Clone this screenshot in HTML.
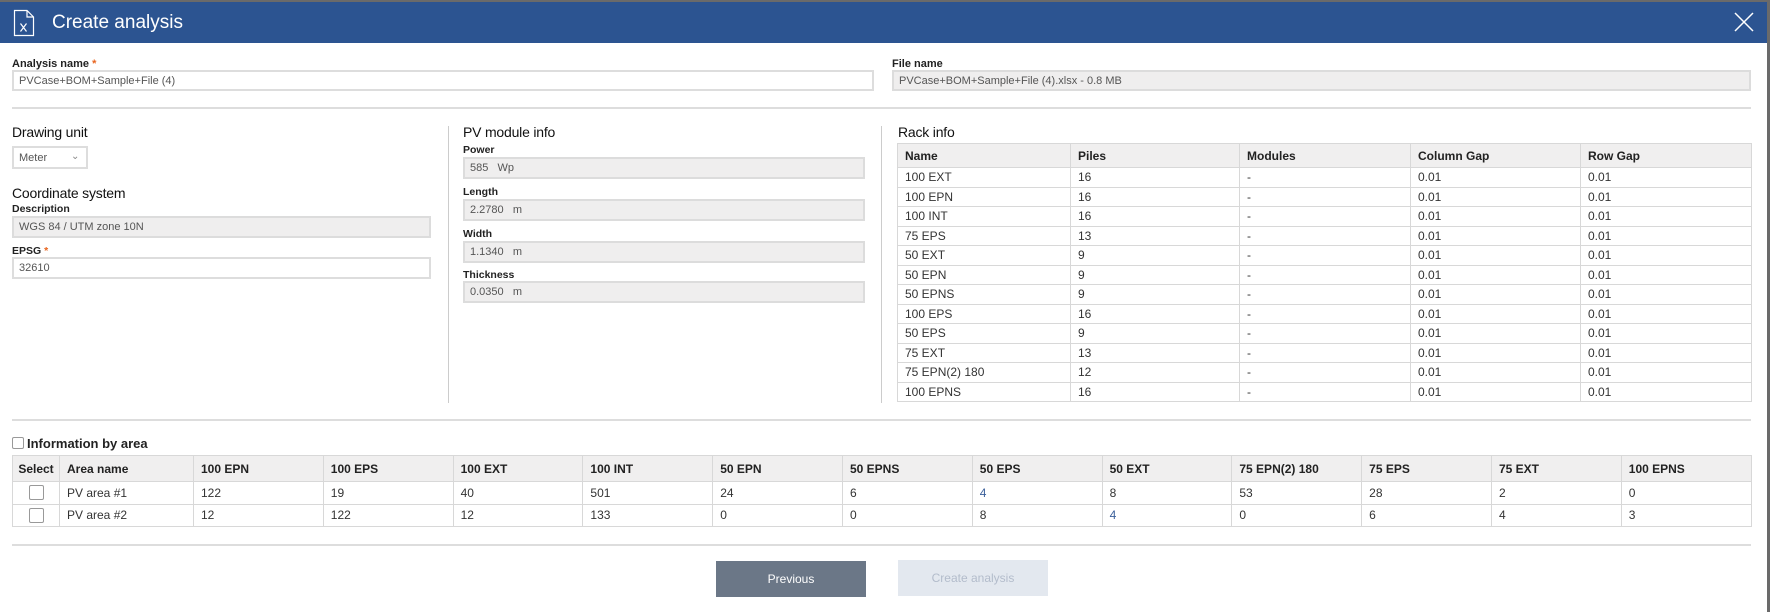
<!DOCTYPE html>
<html><head><meta charset="utf-8"><style>
*{box-sizing:border-box;margin:0;padding:0}
body{width:1770px;height:612px;background:#6a6a6a;font-family:"Liberation Sans",sans-serif;color:#222;position:relative;overflow:hidden}
.modal{position:absolute;left:0;top:2px;width:1767px;height:610px;background:#fff}
.hdr{position:absolute;left:0;top:0;width:1767px;height:41px;background:#2c5491;color:#fff}
.hdr .t{position:absolute;left:52px;top:10px;font-size:19px}
.a{position:absolute}
.lbl{position:absolute;font-size:11px;font-weight:bold;color:#222}
.star{color:#e8641e}
.inp{position:absolute;border:2px solid #ddd;background:#fff;font-size:11px;color:#555;padding-left:5px;display:flex;align-items:center}
.ro{background:#efeeee;border-color:#dcdcdc}
.h2{position:absolute;font-size:14px;color:#111;letter-spacing:-0.2px}
.hr{position:absolute;left:12px;width:1739px;height:2px;background:#ddd}
.vr{position:absolute;width:1px;background:#ccc}
table{position:absolute;border-collapse:collapse;font-size:12px;table-layout:fixed}
td,th{border:1.5px solid #d8d8d8;text-align:left;padding:0 0 0 7px;font-weight:normal;white-space:nowrap}
th{background:#f0efef;font-weight:bold;color:#222}
.rack td{height:19.5px;color:#333}
.rack th{height:24px}
.area th{height:26px}
.area td{height:22.5px;color:#333}
.cb{display:inline-block;width:15px;height:15px;border:1.5px solid #999;border-radius:2px;background:#fff;vertical-align:middle}
.btn{position:absolute;font-size:12px;display:flex;align-items:center;justify-content:center}
</style></head><body>
<div class="modal">
<div class="hdr">
<svg class="a" style="left:13px;top:7px" width="22" height="28" viewBox="0 0 22 28" fill="none" stroke="#fff" stroke-width="1.2"><path d="M1.5 1.5H14L20.5 8V26.5H1.5Z"/><path d="M14 1.5V8H20.5"/><path d="M7.5 14.5L13.5 22.5M13.5 14.5L7.5 22.5"/></svg>
<div class="t">Create analysis</div>
<svg class="a" style="left:1733px;top:9px" width="22" height="22" viewBox="0 0 22 22" stroke="#fff" stroke-width="1.5"><path d="M2 2L20 20M20 2L2 20"/></svg>
</div>

<div class="lbl" style="left:12px;top:56px">Analysis name <span class="star">*</span></div>
<div class="inp" style="left:12px;top:68px;width:862px;height:21px">PVCase+BOM+Sample+File (4)</div>
<div class="lbl" style="left:892px;top:56px">File name</div>
<div class="inp ro" style="left:892px;top:68px;width:859px;height:21px">PVCase+BOM+Sample+File (4).xlsx - 0.8 MB</div>
<div class="hr" style="top:105px"></div>

<div class="h2" style="left:12px;top:122px">Drawing unit</div>
<div class="inp" style="left:12px;top:144px;width:76px;height:23px">Meter<span style="position:absolute;left:57px;top:3px;color:#888;font-size:10px">&#8964;</span></div>
<div class="h2" style="left:12px;top:183px">Coordinate system</div>
<div class="lbl" style="left:12px;top:201px;font-size:10.5px">Description</div>
<div class="inp ro" style="left:12px;top:214px;width:419px;height:22px">WGS 84 / UTM zone 10N</div>
<div class="lbl" style="left:12px;top:243px;font-size:10.5px">EPSG <span class="star">*</span></div>
<div class="inp" style="left:12px;top:255px;width:419px;height:22px">32610</div>

<div class="vr" style="left:448px;top:124px;height:277px"></div>
<div class="h2" style="left:463px;top:122px">PV module info</div>
<div class="lbl" style="left:463px;top:142px;font-size:10.5px">Power</div>
<div class="inp ro" style="left:463px;top:155px;width:402px;height:22px">585&nbsp;&nbsp; Wp</div>
<div class="lbl" style="left:463px;top:184px;font-size:10.5px">Length</div>
<div class="inp ro" style="left:463px;top:197px;width:402px;height:22px">2.2780&nbsp;&nbsp; m</div>
<div class="lbl" style="left:463px;top:226px;font-size:10.5px">Width</div>
<div class="inp ro" style="left:463px;top:239px;width:402px;height:22px">1.1340&nbsp;&nbsp; m</div>
<div class="lbl" style="left:463px;top:267px;font-size:10.5px">Thickness</div>
<div class="inp ro" style="left:463px;top:279px;width:402px;height:22px">0.0350&nbsp;&nbsp; m</div>

<div class="vr" style="left:881px;top:124px;height:277px"></div>
<div class="h2" style="left:898px;top:122px">Rack info</div>
<table class="rack" style="left:897px;top:141px;width:854px">
<colgroup><col style="width:173px"><col style="width:169px"><col style="width:171px"><col style="width:170px"><col style="width:171px"></colgroup>
<tr><th>Name</th><th>Piles</th><th>Modules</th><th>Column Gap</th><th>Row Gap</th></tr>
<tr><td>100 EXT</td><td>16</td><td>-</td><td>0.01</td><td>0.01</td></tr>
<tr><td>100 EPN</td><td>16</td><td>-</td><td>0.01</td><td>0.01</td></tr>
<tr><td>100 INT</td><td>16</td><td>-</td><td>0.01</td><td>0.01</td></tr>
<tr><td>75 EPS</td><td>13</td><td>-</td><td>0.01</td><td>0.01</td></tr>
<tr><td>50 EXT</td><td>9</td><td>-</td><td>0.01</td><td>0.01</td></tr>
<tr><td>50 EPN</td><td>9</td><td>-</td><td>0.01</td><td>0.01</td></tr>
<tr><td>50 EPNS</td><td>9</td><td>-</td><td>0.01</td><td>0.01</td></tr>
<tr><td>100 EPS</td><td>16</td><td>-</td><td>0.01</td><td>0.01</td></tr>
<tr><td>50 EPS</td><td>9</td><td>-</td><td>0.01</td><td>0.01</td></tr>
<tr><td>75 EXT</td><td>13</td><td>-</td><td>0.01</td><td>0.01</td></tr>
<tr><td>75 EPN(2) 180</td><td>12</td><td>-</td><td>0.01</td><td>0.01</td></tr>
<tr><td>100 EPNS</td><td>16</td><td>-</td><td>0.01</td><td>0.01</td></tr>
</table>

<div class="hr" style="top:417px"></div>
<div class="a" style="left:12px;top:434px;font-size:13px;font-weight:bold;color:#222"><span class="cb" style="width:12px;height:12px;border-width:1px;margin-right:3px;vertical-align:-1px"></span>Information by area</div>
<table class="area" style="left:12px;top:453px;width:1739px">
<colgroup><col style="width:47px"><col style="width:134px"><col span="12" style="width:129.8px"></colgroup>
<tr><th style="padding:0;text-align:center">Select</th><th>Area name</th><th>100 EPN</th><th>100 EPS</th><th>100 EXT</th><th>100 INT</th><th>50 EPN</th><th>50 EPNS</th><th>50 EPS</th><th>50 EXT</th><th>75 EPN(2) 180</th><th>75 EPS</th><th>75 EXT</th><th>100 EPNS</th></tr>
<tr><td style="padding:0;text-align:center"><span class="cb"></span></td><td>PV area #1</td><td>122</td><td>19</td><td>40</td><td>501</td><td>24</td><td>6</td><td style="color:#3a5f9a">4</td><td>8</td><td>53</td><td>28</td><td>2</td><td>0</td></tr>
<tr><td style="padding:0;text-align:center"><span class="cb"></span></td><td>PV area #2</td><td>12</td><td>122</td><td>12</td><td>133</td><td>0</td><td>0</td><td>8</td><td style="color:#3a5f9a">4</td><td>0</td><td>6</td><td>4</td><td>3</td></tr>
</table>

<div class="hr" style="top:542px"></div>
<div class="btn" style="left:716px;top:559px;width:150px;height:36px;background:#6b7787;color:#fff">Previous</div>
<div class="btn" style="left:898px;top:558px;width:150px;height:36px;background:#e3e8ef;color:#b3bccb">Create analysis</div>
</div>
</body></html>
